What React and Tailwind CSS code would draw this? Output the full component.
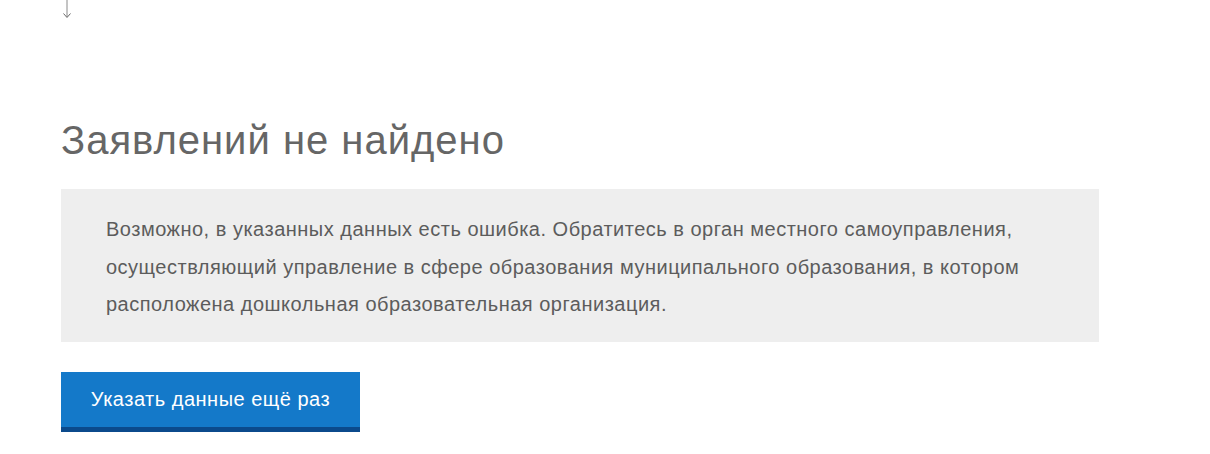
export default function App() {
  return (
    <div className="min-h-[454px] bg-white [font-family:'Liberation_Sans',Arial,sans-serif]">
      <div className="px-[61px]">
        {/* stray marker at the very top */}
        <div className="h-[117px] relative">
          <svg className="absolute left-[1px] top-0" width="10" height="19" viewBox="0 0 10 19">
            <path d="M5 0 V17" stroke="#8a8a8a" strokeWidth="1" fill="none" />
            <path d="M1.5 13.5 L5 17.5 L8.5 13.5" stroke="#6a6a6a" strokeWidth="1" fill="none" />
          </svg>
        </div>

        <h1 className="text-[40px] leading-[46px] tracking-[1px] text-[#666666] font-normal">Заявлений не найдено</h1>

        <div className="mt-[26px] w-[1038px] bg-[#eeeeee] pl-[45px] pr-[40px] pt-[22px] pb-[18px]">
          <p className="text-[20px] tracking-[0.5px] leading-[37.5px] text-[#5c5c5c]">
            Возможно, в указанных данных есть ошибка. Обратитесь в орган местного самоуправления,
            осуществляющий управление в сфере образования муниципального образования, в котором
            расположена дошкольная образовательная организация.
          </p>
        </div>

        <button className="mt-[30px] w-[299px] h-[60px] bg-[#1479c9] border-b-[5px] border-[#0b4a8c] text-white text-[20px] tracking-[0.5px]">
          Указать данные ещё раз
        </button>
      </div>
    </div>
  )
}
